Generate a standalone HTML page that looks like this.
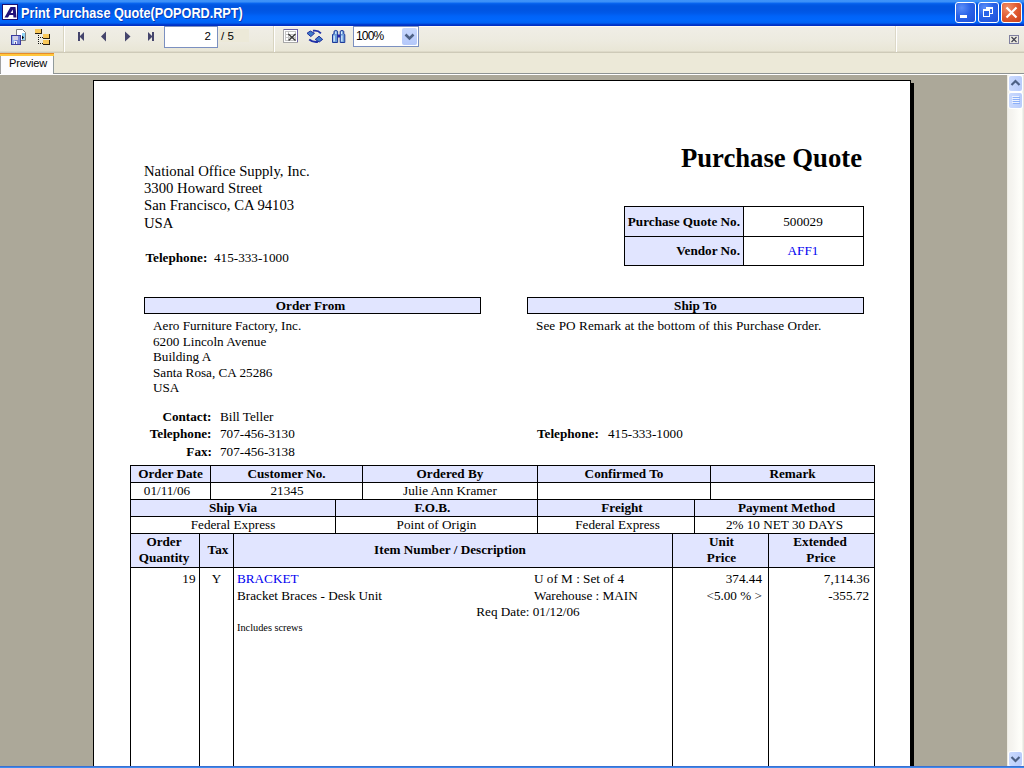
<!DOCTYPE html>
<html><head><meta charset="utf-8">
<style>
*{margin:0;padding:0;box-sizing:border-box}
html,body{width:1024px;height:768px;overflow:hidden;background:#ACA899;font-family:"Liberation Sans",sans-serif}
.a{position:absolute}
#title{left:0;top:0;width:1024px;height:26px;
background:linear-gradient(to bottom,#3E93F9 0px,#3B8FF7 2px,#0C6AF2 3px,#045DE9 4px,#0055E0 6px,#0055E2 10px,#0059E9 13px,#0063F8 16px,#0067FD 20px,#0062F3 23px,#0046D9 24px,#0030C4 25px,#0030C4 26px)}
#title .t{left:21px;top:4.7px;color:#fff;font-weight:bold;font-size:14px;line-height:16px;white-space:pre;transform:scaleX(0.905);transform-origin:0 0;text-shadow:1px 1px 0 #0A3AB0}
#toolbar{left:0;top:26px;width:1024px;height:27px;background:linear-gradient(to bottom,#FBFAF4 0px,#FBFAF4 1px,#EFEDE5 1px,#EFEDE5 4px,#EDEBE0 14px,#E9E6D6 25px,#D2CEBC 26px,#CAC6B4 27px)}
#tabs{left:0;top:53px;width:1024px;height:20px;background:#ECE9D8}
#sep73{left:0;top:73px;width:1024px;height:1px;background:#8E9393}
#sep74{left:0;top:74px;width:1024px;height:1px;background:#FFFFFF}
#page{left:93px;top:80px;width:818px;height:700px;background:#fff;border:1px solid #000}
#shadow{left:911px;top:83px;width:3px;height:700px;background:#000}
#vscroll{left:1007px;top:75px;width:17px;height:691px;background:linear-gradient(to right,#F2F1EB 0px,#F6F5F1 6px,#FDFDF9 12px,#FEFEF8 15px,#E6E7E0 16px,#E6E7E0 17px)}
#bottom{left:0;top:766px;width:1024px;height:2px;background:linear-gradient(to bottom,#3A70D2 0,#3A70D2 1px,#3E8BEE 1px)}
.s{font-family:"Liberation Serif",serif;white-space:pre;color:#000}
.ser{font-family:"Liberation Serif",serif;white-space:pre;color:#000}
.b{font-weight:bold}
.ui{font-family:"Liberation Sans",sans-serif;color:#000;white-space:pre}
.tbtn{top:2px;width:21px;height:21px;border:1px solid #fff;border-radius:3px;background:radial-gradient(circle at 30% 25%,#5C8EF8 0%,#2A63E8 45%,#1E4FD8 100%)}
.cbtn{background:radial-gradient(circle at 30% 25%,#F0906A 0%,#E05A30 50%,#C8401A 100%)}
.sbtn{width:13px;border-radius:2px;background:linear-gradient(to right,#CADAFE,#B9CCFB);box-shadow:0 0 0 1px #FFFFFF}
.hl{background:#DCE4FA}
.ln{background:#000}
</style></head><body>
<div id="title" class="a">
 <div class="a" style="left:2px;top:4px;width:16px;height:16px;background:#1A1070;"></div>
 <div class="a" style="left:3px;top:5px;width:14px;height:14px;background:#FFFFFF;"></div>
 <svg class="a" style="left:2px;top:4px" width="16" height="16" viewBox="0 0 16 16"><path d="M2.5 13.5 L8.5 3 L13.5 3 L14.5 13.5 L11.5 13.5 L11.2 11 L7.5 11 L6 13.5 Z M8.6 9 L11 9 L10.8 5.6 Z" fill="#22117A" fill-rule="evenodd"/></svg>
 <div class="t a">Print Purchase Quote(POPORD.RPT)</div>
 <!-- title buttons -->
 <div class="a tbtn" style="left:955px;"><div class="a" style="left:4px;top:12px;width:7px;height:3px;background:#fff"></div></div>
 <div class="a tbtn" style="left:978px;">
   <div class="a" style="left:7px;top:4px;width:7px;height:7px;border:1px solid #fff;border-top-width:2px"></div>
   <div class="a" style="left:4px;top:6px;width:7px;height:8px;border:1px solid #fff;border-top-width:2px;background:#2A63E8"></div>
 </div>
 <div class="a tbtn cbtn" style="left:1001px;"><svg class="a" style="left:0;top:0" width="21" height="21"><path d="M4.5 4.5 L14.5 14.5 M14.5 4.5 L4.5 14.5" stroke="#fff" stroke-width="2.2"/></svg></div>
</div>
<div id="toolbar" class="a">
 <!-- export icon -->
 <svg class="a" style="left:8px;top:0px" width="20" height="22" viewBox="0 0 20 22">
  <path d="M8.5 3.5 H14.5 L17.5 6.5 V14.5 H8.5 Z" fill="#fff" stroke="#808080"/>
  <rect x="14" y="7" width="3" height="7" fill="#90D4F8"/>
  <path d="M14 9.5 L16 11.5 L14 13.5 Z" fill="#000"/>
  <rect x="3" y="9" width="10" height="10" fill="#3C3CA0"/>
  <rect x="4" y="10" width="8" height="8" fill="#7C88D8"/>
  <rect x="4" y="10" width="3" height="8" fill="#98B4EC"/>
  <rect x="5" y="10" width="5" height="4" fill="#D4D0E4"/>
  <rect x="6" y="15" width="3" height="3" fill="#F0F0F8"/>
  <rect x="7" y="16" width="1" height="2" fill="#5050A0"/>
 </svg>
 <!-- group tree icon -->
 <svg class="a" style="left:34px;top:2px" width="18" height="20" viewBox="0 0 18 20">
  <rect x="1" y="1" width="7" height="5" fill="#F9C85A" stroke="#3A2A10" stroke-width="0"/>
  <rect x="1" y="5" width="7" height="1" fill="#2A2010"/><rect x="7" y="1" width="1" height="5" fill="#2A2010"/>
  <rect x="9" y="6" width="7" height="5" fill="#F9C85A"/>
  <rect x="9" y="10" width="7" height="1" fill="#2A2010"/><rect x="15" y="6" width="1" height="5" fill="#2A2010"/>
  <rect x="9" y="12" width="7" height="5" fill="#F9C85A"/>
  <rect x="9" y="16" width="7" height="1" fill="#2A2010"/><rect x="15" y="12" width="1" height="5" fill="#2A2010"/>
  <g fill="#111"><rect x="4" y="7" width="1" height="1"/><rect x="4" y="9" width="1" height="1"/><rect x="4" y="11" width="1" height="1"/><rect x="4" y="13" width="1" height="1"/><rect x="4" y="15" width="1" height="1"/>
  <rect x="6" y="9" width="1" height="1"/><rect x="8" y="9" width="1" height="1"/><rect x="6" y="15" width="1" height="1"/><rect x="8" y="15" width="1" height="1"/></g>
 </svg>
 <div class="a" style="left:63px;top:0;width:1px;height:26px;background:#D8D4C0"></div>
 <div class="a" style="left:64px;top:0;width:1px;height:26px;background:#FFFFFF"></div>
 <!-- nav -->
 <svg class="a" style="left:70px;top:0" width="100" height="26">
  <g fill="#45456C">
   <rect x="8" y="6" width="2" height="9"/><path d="M9.5 10.5 L14 6 V15 Z"/>
   <path d="M31 10.5 L36 5.6 V15.4 Z"/>
   <path d="M55 5.6 L60.5 10.5 L55 15.4 Z"/>
   <path d="M78 6 L82.5 10.5 L78 15 Z"/><rect x="82" y="6" width="2" height="9"/>
  </g>
 </svg>
 <!-- page input -->
 <div class="a" style="left:164px;top:0px;width:54px;height:22px;border:1px solid #7B90C0;background:#fff"></div>
 <div class="a ui" style="left:164px;top:4px;width:47px;text-align:right;font-size:11.5px;line-height:13px">2</div>
 <div class="a" style="left:219px;top:3px;width:30px;height:13px;background:#ECE9D8"></div>
 <div class="a ui" style="left:221px;top:4px;font-size:11.5px;line-height:13px">/ 5</div>
 <div class="a" style="left:273px;top:0;width:1px;height:26px;background:#D8D4C0"></div>
 <div class="a" style="left:274px;top:0;width:1px;height:26px;background:#FFFFFF"></div>
 <!-- stop icon -->
 <svg class="a" style="left:280px;top:1px" width="22" height="18" viewBox="0 0 22 18">
  <rect x="3" y="2" width="15" height="14" fill="#A8A8A8"/>
  <rect x="4" y="2" width="14" height="13" fill="#6A5FA8"/>
  <rect x="4" y="3" width="13" height="12" fill="#FFFFFF"/>
  <g fill="#C4C4C4"><rect x="5" y="4" width="11" height="1"/><rect x="5" y="4" width="1" height="10"/><rect x="15" y="4" width="1" height="10"/><rect x="5" y="13" width="11" height="1"/>
  <rect x="5" y="7" width="11" height="1"/><rect x="5" y="10" width="11" height="1"/><rect x="8" y="4" width="1" height="10"/></g>
  <path d="M8.3 7 L15.5 13.6 M15.5 7 L8.6 13.6" stroke="#3A3A3A" stroke-width="1.4"/>
 </svg>
 <!-- refresh icon -->
 <svg class="a" style="left:304px;top:1px" width="22" height="18" viewBox="0 0 22 18">
  <path d="M16.9 6.3 Q14 3 9 3.8" stroke="#2030A8" stroke-width="1.9" fill="none"/>
  <path d="M3 6.3 L6.3 4 L10.5 6.3 L6.8 9.6 Z" fill="#3E7CC8" stroke="#1E2C9C" stroke-width="1"/>
  <path d="M5.2 12.4 Q9 15.6 14 14.8" stroke="#2030A8" stroke-width="1.9" fill="none"/>
  <path d="M11.2 12.4 L15 9.2 L18.7 12.4 L15.2 15 Z" fill="#3E7CC8" stroke="#1E2C9C" stroke-width="1"/>
 </svg>
 <!-- binoculars -->
 <svg class="a" style="left:328px;top:1px" width="22" height="18" viewBox="0 0 22 18">
  <path d="M4.5 15.5 V7.5 L6 6.8 V4.2 Q7.8 2.6 9.6 4.2 V15.5 Z" fill="#6A9BD8" stroke="#1E3A9A" stroke-width="1"/>
  <path d="M12.2 15.5 V4.2 Q14 2.6 15.8 4.2 V6.8 L16.8 7.5 V15.5 Z" fill="#6A9BD8" stroke="#1E3A9A" stroke-width="1"/>
  <rect x="9.5" y="7.5" width="2.8" height="3" fill="#2A2AA8"/>
  <rect x="5.5" y="8.5" width="1.3" height="6" fill="#D8F0FF"/><rect x="13.2" y="8.5" width="1.3" height="6" fill="#D8F0FF"/>
  <rect x="7.2" y="4.5" width="1.2" height="2.5" fill="#D8F0FF"/><rect x="13" y="4.5" width="1.2" height="2.5" fill="#D8F0FF"/>
 </svg>
 <!-- zoom combo -->
 <div class="a" style="left:353px;top:0px;width:66px;height:21px;border:1px solid #7B90C0;background:#fff"></div>
 <div class="a ui" style="left:356px;top:4px;font-size:12px;line-height:13px;letter-spacing:-0.8px">100%</div>
 <div class="a" style="left:402px;top:2px;width:15px;height:17px;border-radius:2px;background:linear-gradient(to bottom,#C8D8FE,#B4C8FA)"></div>
 <svg class="a" style="left:402px;top:2px" width="15" height="17"><path d="M3.5 6.5 L7.5 10.5 L11.5 6.5" stroke="#4D6185" stroke-width="2.5" fill="none"/></svg>
 <div class="a" style="left:896px;top:0;width:1px;height:26px;background:#FFFFFF"></div>
 <div class="a" style="left:895px;top:0;width:1px;height:26px;background:#DCD8C8"></div>
 <svg class="a" style="left:1009px;top:9px" width="10" height="9" viewBox="0 0 10 9"><rect x="0.5" y="0.5" width="9" height="8" fill="none" stroke="#8080A0"/><path d="M2.5 2 L7.5 7 M7.5 2 L2.5 7" stroke="#404050" stroke-width="1.2"/></svg>
</div>
<div id="tabs" class="a">
 <div class="a" style="left:0;top:0;width:54px;height:3px;background:linear-gradient(to bottom,#E68B2C 0,#E68B2C 1px,#FFC73C 1px)"></div>
 <div class="a" style="left:0;top:3px;width:54px;height:19px;background:#FCFCFE;border-right:1px solid #919B9C;border-left:1px solid #A0A0A0"></div>
 <div class="a ui" style="left:9px;top:4px;font-size:11px;line-height:13px;letter-spacing:-0.15px">Preview</div>
</div>
<div id="sep73" class="a"></div>
<div id="sep74" class="a"></div>
<div id="tabfix" class="a" style="left:1px;top:73px;width:52px;height:2px;background:#FCFCFE"></div>
<div id="vscroll" class="a">
 <div class="a" style="left:0;top:0;width:1px;height:691px;background:#EDEBE2"></div>
 <div class="a sbtn" style="left:2px;top:1px;height:15px"><svg class="a" style="left:0;top:0" width="13" height="15"><path d="M2.5 9 L6.5 5 L10.5 9" stroke="#4D6185" stroke-width="2.2" fill="none"/></svg></div>
 <div class="a sbtn" style="left:2px;top:18px;height:15px"><svg class="a" style="left:0;top:0" width="13" height="15"><g fill="#EEF3FE"><rect x="3" y="3" width="7" height="1"/><rect x="3" y="5" width="7" height="1"/><rect x="3" y="7" width="7" height="1"/><rect x="3" y="9" width="7" height="1"/></g><g fill="#8CB0F8"><rect x="4" y="4" width="7" height="1"/><rect x="4" y="6" width="7" height="1"/><rect x="4" y="8" width="7" height="1"/><rect x="4" y="10" width="7" height="1"/></g></svg></div>
 <div class="a sbtn" style="left:2px;top:677px;height:14px"><svg class="a" style="left:0;top:0" width="13" height="14"><path d="M2.5 5 L6.5 9 L10.5 5" stroke="#4D6185" stroke-width="2.2" fill="none"/></svg></div>
</div>

<div id="page" class="a"></div>
<div id="shadow" class="a"></div>
<div class="a s" style="left:462px;width:400px;text-align:right;top:144.64px;font-size:26.7px;line-height:26.7px;color:#000;font-weight:bold;">Purchase Quote</div>
<div class="a s" style="left:144px;top:163.69px;font-size:14.7px;line-height:14.7px;color:#000;">National Office Supply, Inc.</div>
<div class="a s" style="left:144px;top:181.09px;font-size:14.7px;line-height:14.7px;color:#000;">3300 Howard Street</div>
<div class="a s" style="left:144px;top:198.49px;font-size:14.7px;line-height:14.7px;color:#000;">San Francisco, CA 94103</div>
<div class="a s" style="left:144px;top:215.89px;font-size:14.7px;line-height:14.7px;color:#000;">USA</div>
<div class="a s" style="left:145.5px;top:251.25px;font-size:13.2px;line-height:13.2px;color:#000;font-weight:bold;">Telephone:</div>
<div class="a s" style="left:214px;top:251.25px;font-size:13.2px;line-height:13.2px;color:#000;">415-333-1000</div>
<div class="a" style="left:624px;top:206px;width:120px;height:60px;background:#E1E5FF;"></div>
<div class="a" style="left:624px;top:206px;width:240px;height:1px;background:#000;"></div>
<div class="a" style="left:624px;top:236px;width:240px;height:1px;background:#000;"></div>
<div class="a" style="left:624px;top:265px;width:240px;height:1px;background:#000;"></div>
<div class="a" style="left:624px;top:206px;width:1px;height:60px;background:#000;"></div>
<div class="a" style="left:743px;top:206px;width:1px;height:60px;background:#000;"></div>
<div class="a" style="left:863px;top:206px;width:1px;height:60px;background:#000;"></div>
<div class="a s" style="left:340px;width:400px;text-align:right;top:215.25px;font-size:13.2px;line-height:13.2px;color:#000;font-weight:bold;">Purchase Quote No.</div>
<div class="a s" style="left:340px;width:400px;text-align:right;top:244.45px;font-size:13.2px;line-height:13.2px;color:#000;font-weight:bold;">Vendor No.</div>
<div class="a s" style="left:503px;width:600px;text-align:center;top:215.25px;font-size:13.2px;line-height:13.2px;color:#000;">500029</div>
<div class="a s" style="left:503px;width:600px;text-align:center;top:244.45px;font-size:13.2px;line-height:13.2px;color:#0000F0;">AFF1</div>
<div class="a" style="left:144px;top:297px;width:337px;height:17px;background:#E1E5FF;"></div>
<div class="a" style="left:144px;top:297px;width:337px;height:1px;background:#000;"></div>
<div class="a" style="left:144px;top:313px;width:337px;height:1px;background:#000;"></div>
<div class="a" style="left:144px;top:297px;width:1px;height:17px;background:#000;"></div>
<div class="a" style="left:480px;top:297px;width:1px;height:17px;background:#000;"></div>
<div class="a s" style="left:10.5px;width:600px;text-align:center;top:298.95px;font-size:13.2px;line-height:13.2px;color:#000;font-weight:bold;">Order From</div>
<div class="a" style="left:527px;top:297px;width:337px;height:17px;background:#E1E5FF;"></div>
<div class="a" style="left:527px;top:297px;width:337px;height:1px;background:#000;"></div>
<div class="a" style="left:527px;top:313px;width:337px;height:1px;background:#000;"></div>
<div class="a" style="left:527px;top:297px;width:1px;height:17px;background:#000;"></div>
<div class="a" style="left:863px;top:297px;width:1px;height:17px;background:#000;"></div>
<div class="a s" style="left:395.5px;width:600px;text-align:center;top:298.95px;font-size:13.2px;line-height:13.2px;color:#000;font-weight:bold;">Ship To</div>
<div class="a s" style="left:153px;top:318.95px;font-size:13.2px;line-height:13.2px;color:#000;">Aero Furniture Factory, Inc.</div>
<div class="a s" style="left:153px;top:334.50px;font-size:13.2px;line-height:13.2px;color:#000;">6200 Lincoln Avenue</div>
<div class="a s" style="left:153px;top:350.05px;font-size:13.2px;line-height:13.2px;color:#000;">Building A</div>
<div class="a s" style="left:153px;top:365.60px;font-size:13.2px;line-height:13.2px;color:#000;">Santa Rosa, CA 25286</div>
<div class="a s" style="left:153px;top:381.15px;font-size:13.2px;line-height:13.2px;color:#000;">USA</div>
<div class="a s" style="left:536px;top:318.95px;font-size:13.2px;line-height:13.2px;color:#000;letter-spacing:0.08px;">See PO Remark at the bottom of this Purchase Order.</div>
<div class="a s" style="left:-188.5px;width:400px;text-align:right;top:409.65px;font-size:13.2px;line-height:13.2px;color:#000;font-weight:bold;">Contact:</div>
<div class="a s" style="left:220px;top:409.65px;font-size:13.2px;line-height:13.2px;color:#000;">Bill Teller</div>
<div class="a s" style="left:-188.5px;width:400px;text-align:right;top:426.95px;font-size:13.2px;line-height:13.2px;color:#000;font-weight:bold;">Telephone:</div>
<div class="a s" style="left:220px;top:426.95px;font-size:13.2px;line-height:13.2px;color:#000;">707-456-3130</div>
<div class="a s" style="left:-188px;width:400px;text-align:right;top:445.25px;font-size:13.2px;line-height:13.2px;color:#000;font-weight:bold;">Fax:</div>
<div class="a s" style="left:220px;top:445.25px;font-size:13.2px;line-height:13.2px;color:#000;">707-456-3138</div>
<div class="a s" style="left:537px;top:426.95px;font-size:13.2px;line-height:13.2px;color:#000;font-weight:bold;">Telephone:</div>
<div class="a s" style="left:608px;top:426.95px;font-size:13.2px;line-height:13.2px;color:#000;">415-333-1000</div>
<div class="a" style="left:130px;top:465px;width:744px;height:17px;background:#E1E5FF;"></div>
<div class="a" style="left:130px;top:499px;width:744px;height:17px;background:#E1E5FF;"></div>
<div class="a" style="left:130px;top:533px;width:744px;height:34px;background:#E1E5FF;"></div>
<div class="a" style="left:130px;top:465px;width:745px;height:1px;background:#000;"></div>
<div class="a" style="left:130px;top:482px;width:745px;height:1px;background:#000;"></div>
<div class="a" style="left:130px;top:499px;width:745px;height:1px;background:#000;"></div>
<div class="a" style="left:130px;top:516px;width:745px;height:1px;background:#000;"></div>
<div class="a" style="left:130px;top:533px;width:745px;height:1px;background:#000;"></div>
<div class="a" style="left:130px;top:567px;width:745px;height:1px;background:#000;"></div>
<div class="a" style="left:130px;top:465px;width:1px;height:320px;background:#000;"></div>
<div class="a" style="left:874px;top:465px;width:1px;height:320px;background:#000;"></div>
<div class="a" style="left:210px;top:465px;width:1px;height:34px;background:#000;"></div>
<div class="a" style="left:362px;top:465px;width:1px;height:34px;background:#000;"></div>
<div class="a" style="left:537px;top:465px;width:1px;height:34px;background:#000;"></div>
<div class="a" style="left:710px;top:465px;width:1px;height:34px;background:#000;"></div>
<div class="a" style="left:335px;top:499px;width:1px;height:34px;background:#000;"></div>
<div class="a" style="left:537px;top:499px;width:1px;height:34px;background:#000;"></div>
<div class="a" style="left:694px;top:499px;width:1px;height:34px;background:#000;"></div>
<div class="a" style="left:199px;top:533px;width:1px;height:260px;background:#000;"></div>
<div class="a" style="left:233px;top:533px;width:1px;height:260px;background:#000;"></div>
<div class="a" style="left:672px;top:533px;width:1px;height:260px;background:#000;"></div>
<div class="a" style="left:768px;top:533px;width:1px;height:260px;background:#000;"></div>
<div class="a s" style="left:-129.5px;width:600px;text-align:center;top:466.65px;font-size:13.2px;line-height:13.2px;color:#000;font-weight:bold;">Order Date</div>
<div class="a s" style="left:-13.5px;width:600px;text-align:center;top:466.65px;font-size:13.2px;line-height:13.2px;color:#000;font-weight:bold;">Customer No.</div>
<div class="a s" style="left:150.0px;width:600px;text-align:center;top:466.65px;font-size:13.2px;line-height:13.2px;color:#000;font-weight:bold;">Ordered By</div>
<div class="a s" style="left:324.0px;width:600px;text-align:center;top:466.65px;font-size:13.2px;line-height:13.2px;color:#000;font-weight:bold;">Confirmed To</div>
<div class="a s" style="left:492.5px;width:600px;text-align:center;top:466.65px;font-size:13.2px;line-height:13.2px;color:#000;font-weight:bold;">Remark</div>
<div class="a s" style="left:-133.0px;width:600px;text-align:center;top:484.25px;font-size:13.2px;line-height:13.2px;color:#000;">01/11/06</div>
<div class="a s" style="left:-13.0px;width:600px;text-align:center;top:484.25px;font-size:13.2px;line-height:13.2px;color:#000;">21345</div>
<div class="a s" style="left:150.0px;width:600px;text-align:center;top:484.25px;font-size:13.2px;line-height:13.2px;color:#000;">Julie Ann Kramer</div>
<div class="a s" style="left:-67.0px;width:600px;text-align:center;top:501.15px;font-size:13.2px;line-height:13.2px;color:#000;font-weight:bold;">Ship Via</div>
<div class="a s" style="left:132.5px;width:600px;text-align:center;top:501.15px;font-size:13.2px;line-height:13.2px;color:#000;font-weight:bold;">F.O.B.</div>
<div class="a s" style="left:322.0px;width:600px;text-align:center;top:501.15px;font-size:13.2px;line-height:13.2px;color:#000;font-weight:bold;">Freight</div>
<div class="a s" style="left:486.5px;width:600px;text-align:center;top:501.15px;font-size:13.2px;line-height:13.2px;color:#000;font-weight:bold;">Payment Method</div>
<div class="a s" style="left:-67.0px;width:600px;text-align:center;top:518.44px;font-size:13.2px;line-height:13.2px;color:#000;">Federal Express</div>
<div class="a s" style="left:136.5px;width:600px;text-align:center;top:518.44px;font-size:13.2px;line-height:13.2px;color:#000;">Point of Origin</div>
<div class="a s" style="left:317.5px;width:600px;text-align:center;top:518.44px;font-size:13.2px;line-height:13.2px;color:#000;">Federal Express</div>
<div class="a s" style="left:484.5px;width:600px;text-align:center;top:518.44px;font-size:13.2px;line-height:13.2px;color:#000;">2% 10 NET 30 DAYS</div>
<div class="a s" style="left:-136.0px;width:600px;text-align:center;top:535.44px;font-size:13.2px;line-height:13.2px;color:#000;font-weight:bold;">Order</div>
<div class="a s" style="left:-136.0px;width:600px;text-align:center;top:551.44px;font-size:13.2px;line-height:13.2px;color:#000;font-weight:bold;">Quantity</div>
<div class="a s" style="left:-82.0px;width:600px;text-align:center;top:543.44px;font-size:13.2px;line-height:13.2px;color:#000;font-weight:bold;">Tax</div>
<div class="a s" style="left:150.0px;width:600px;text-align:center;top:543.44px;font-size:13.2px;line-height:13.2px;color:#000;font-weight:bold;">Item Number / Description</div>
<div class="a s" style="left:421.5px;width:600px;text-align:center;top:535.44px;font-size:13.2px;line-height:13.2px;color:#000;font-weight:bold;">Unit</div>
<div class="a s" style="left:421.5px;width:600px;text-align:center;top:551.44px;font-size:13.2px;line-height:13.2px;color:#000;font-weight:bold;">Price</div>
<div class="a s" style="left:520.0px;width:600px;text-align:center;top:535.44px;font-size:13.2px;line-height:13.2px;color:#000;font-weight:bold;">Extended</div>
<div class="a s" style="left:521.0px;width:600px;text-align:center;top:551.44px;font-size:13.2px;line-height:13.2px;color:#000;font-weight:bold;">Price</div>
<div class="a s" style="left:-204.5px;width:400px;text-align:right;top:571.94px;font-size:13.2px;line-height:13.2px;color:#000;">19</div>
<div class="a s" style="left:-83.5px;width:600px;text-align:center;top:571.94px;font-size:13.2px;line-height:13.2px;color:#000;">Y</div>
<div class="a s" style="left:237px;top:571.94px;font-size:13.2px;line-height:13.2px;color:#0000F0;">BRACKET</div>
<div class="a s" style="left:237px;top:588.94px;font-size:13.2px;line-height:13.2px;color:#000;">Bracket Braces - Desk Unit</div>
<div class="a s" style="left:237px;top:622.87px;font-size:10.3px;line-height:10.3px;color:#000;">Includes screws</div>
<div class="a s" style="left:534px;top:571.94px;font-size:13.2px;line-height:13.2px;color:#000;">U of M : Set of 4</div>
<div class="a s" style="left:534px;top:588.94px;font-size:13.2px;line-height:13.2px;color:#000;">Warehouse : MAIN</div>
<div class="a s" style="left:476.3px;top:605.24px;font-size:13.2px;line-height:13.2px;color:#000;">Req Date: 01/12/06</div>
<div class="a s" style="left:362px;width:400px;text-align:right;top:571.94px;font-size:13.2px;line-height:13.2px;color:#000;">374.44</div>
<div class="a s" style="left:362px;width:400px;text-align:right;top:588.94px;font-size:13.2px;line-height:13.2px;color:#000;">&lt;5.00 % &gt;</div>
<div class="a s" style="left:469.5px;width:400px;text-align:right;top:571.94px;font-size:13.2px;line-height:13.2px;color:#000;">7,114.36</div>
<div class="a s" style="left:469px;width:400px;text-align:right;top:588.94px;font-size:13.2px;line-height:13.2px;color:#000;">-355.72</div>

<div id="bottom" class="a"></div>
</body></html>
